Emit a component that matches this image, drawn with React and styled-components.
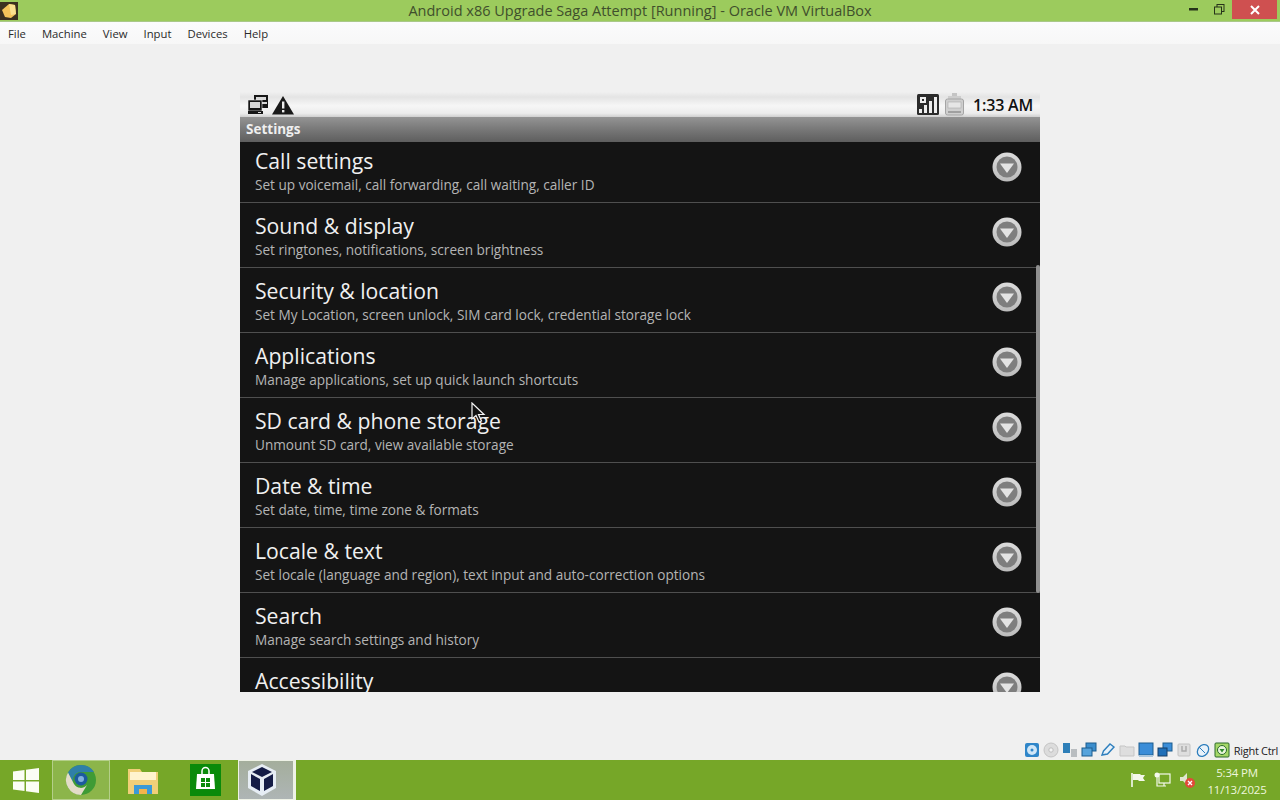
import React from "react";
import styled, { createGlobalStyle } from "styled-components";

const GlobalStyle = createGlobalStyle`
  html, body { margin: 0; padding: 0; }
  body { width: 1280px; height: 800px; overflow: hidden; font-family: "Open Sans", "Liberation Sans", sans-serif; }
`;

const Desktop = styled.div`
  position: relative;
  width: 1280px;
  height: 800px;
  display: flex;
  flex-direction: column;
  background: #f0f0f0;
`;

// window chrome
const TitleBar = styled.div`
  height: 22px;
  flex: none;
  display: grid;
  grid-template-columns: 1fr auto 1fr;
  align-items: center;
  background: #9ccb5d;
  border-bottom: 1px solid #a9c889;
  box-sizing: border-box;
`;
const AppIcon = styled.div`
  width: 18px;
  height: 18px;
  display: flex;
`;
const TitleText = styled.div`
  font-size: 14.5px;
  color: #3f4f2c;
  white-space: nowrap;
`;
const WinButtons = styled.div`
  display: flex;
  justify-content: flex-end;
  align-items: flex-start;
  height: 100%;
  padding-right: 3px;
`;
const WinButton = styled.div`
  width: ${(p) => p.$w}px;
  height: 19px;
  display: flex;
  align-items: center;
  justify-content: center;
  background: ${(p) => (p.$close ? "#cf5050" : "transparent")};
`;
const MenuBar = styled.div`
  height: 22px;
  flex: none;
  display: flex;
  align-items: center;
  background: linear-gradient(#fbfbfc, #f7f7f7);
  padding-left: 8px;
  gap: 16px;
`;
const MenuItem = styled.span`
  font-size: 11.3px;
  color: #2a2a2a;
`;

// guest area
const GuestArea = styled.div`
  flex: 1;
  display: flex;
  justify-content: center;
  padding-top: 48px;
  background: #f0f0f0;
`;
const Screen = styled.div`
  position: relative;
  width: 800px;
  height: 600px;
  display: flex;
  flex-direction: column;
  background: #141414;
  overflow: hidden;
`;
const StatusBar = styled.div`
  height: 25px;
  flex: none;
  display: flex;
  align-items: center;
  padding: 0 7px 0 8px;
  background: linear-gradient(#f0f0f0, #e4e4e4 20%, #f6f6f6 55%, #ececec 85%, #cfcfcf);
`;
const StatusLeft = styled.div`
  display: flex;
  align-items: center;
  gap: 3px;
  flex: 1;
`;
const StatusRight = styled.div`
  display: flex;
  align-items: center;
  gap: 5px;
`;
const Clock = styled.div`
  font-size: 16px;
  font-weight: 600;
  color: #111;
  margin-left: 8px;
  letter-spacing: -0.2px;
`;
const ScreenTitle = styled.div`
  height: 25px;
  flex: none;
  display: flex;
  align-items: center;
  padding: 0 0 2px 6px;
  box-sizing: border-box;
  background: linear-gradient(#949494, #757575 55%, #5e5e5e);
  color: #efefef;
  font-size: 13.5px;
  font-weight: 700;
`;
const List = styled.div`
  flex: 1;
  overflow: hidden;
  display: flex;
  flex-direction: column;
`;
const Row = styled.div`
  height: 65px;
  flex: none;
  box-sizing: border-box;
  margin-top: ${(p) => (p.$first ? "-4px" : "0")};
  display: flex;
  align-items: flex-start;
  padding: 7px 18px 0 15px;
  border-bottom: 1px solid #4f4f4f;
  background: #141414;
`;
const RowText = styled.div`
  flex: 1;
  display: flex;
  flex-direction: column;
`;
const RowTitle = styled.div`
  font-size: 21.2px;
  line-height: 30px;
  margin: 1px 0 -1px;
  color: #f0f0f0;
`;
const RowSub = styled.div`
  font-size: 13.6px;
  line-height: 19px;
  color: #b4b4b4;
`;
const RowButton = styled.svg`
  flex: none;
  margin-top: 7px;
`;
const Scrollbar = styled.div`
  position: absolute;
  right: 0;
  top: 173px;
  width: 4px;
  height: 328px;
  background: #8f8f8f;
  border-radius: 2px;
`;
const Pointer = styled.svg`
  position: absolute;
  left: 471px;
  top: 402px;
`;

// host status bar
const HostStatus = styled.div`
  height: 20px;
  flex: none;
  display: flex;
  align-items: center;
  justify-content: flex-end;
  gap: 3px;
  background: #f0f0f0;
  padding-right: 2px;
`;
const HostKey = styled.span`
  font-size: 11px;
  color: #222;
  margin-left: 1px;
  white-space: nowrap;
  letter-spacing: -0.3px;
`;

// windows taskbar
const Taskbar = styled.div`
  height: 40px;
  flex: none;
  display: flex;
  align-items: stretch;
  background: #76a728;
`;
const StartButton = styled.div`
  width: 52px;
  display: flex;
  align-items: center;
  justify-content: center;
`;
const TaskButton = styled.div`
  width: ${(p) => p.$w}px;
  display: flex;
  align-items: center;
  justify-content: center;
  box-sizing: border-box;
  ${(p) => p.$active && "background: rgba(255,255,255,.16); border: 1px solid rgba(255,255,255,.35);"}
  ${(p) =>
    p.$open &&
    "margin-left: 4px; padding-right: 8px; background: linear-gradient(#a4ae9c, #aeb5b5); border: 1px solid #eef2e6; border-right-width: 3px;"}
`;
const Tray = styled.div`
  margin-left: auto;
  display: flex;
  align-items: center;
  gap: 8px;
  padding-right: 13px;
`;
const TrayClock = styled.div`
  margin-left: 3px;
  width: 60px;
  padding-top: 2px;
  text-align: center;
  color: #eef6dd;
  font-size: 11.5px;
  line-height: 17px;
  letter-spacing: -0.2px;
`;

// last row is cut by the bottom of the guest screen, its summary never shows
const settings = [
  ["Call settings", "Set up voicemail, call forwarding, call waiting, caller ID"],
  ["Sound & display", "Set ringtones, notifications, screen brightness"],
  ["Security & location", "Set My Location, screen unlock, SIM card lock, credential storage lock"],
  ["Applications", "Manage applications, set up quick launch shortcuts"],
  ["SD card & phone storage", "Unmount SD card, view available storage"],
  ["Date & time", "Set date, time, time zone & formats"],
  ["Locale & text", "Set locale (language and region), text input and auto-correction options"],
  ["Search", "Manage search settings and history"],
  ["Accessibility"],
];

const menus = ["File", "Machine", "View", "Input", "Devices", "Help"];

function DownButton() {
  return (
    <RowButton width="30" height="30" viewBox="0 0 30 30">
      <defs>
        <linearGradient id="ring" x1="0" y1="0" x2="0" y2="1">
          <stop offset="0" stopColor="#dcdcdc" />
          <stop offset="1" stopColor="#bcbcbc" />
        </linearGradient>
      </defs>
      <circle cx="15" cy="15" r="14.5" fill="url(#ring)" />
      <circle cx="15" cy="15" r="10.5" fill="#7e7e7e" />
      <path d="M8 11.5h14L15 21z" fill="#e4e4e4" />
    </RowButton>
  );
}

function VboxIcon({ size = 18 }) {
  return (
    <svg width={size} height={size} viewBox="0 0 18 18">
      <rect width="18" height="18" fill="#3b3020" />
      <path d="M2 8l7-6 6 1 1 9-5 4-6-1z" fill="#f4c35a" />
      <path d="M9 2l6 1 1 9-5 1z" fill="#fbe08f" />
    </svg>
  );
}

function NetworkIcon() {
  return (
    <svg width="20" height="20" viewBox="0 0 20 20">
      <rect x="6" y="0" width="14" height="13" fill="#161616" />
      <rect x="8" y="2" width="10" height="3" fill="#d8d8d8" />
      <rect x="14" y="7" width="5" height="2" fill="#d8d8d8" />
      <rect x="0" y="5" width="14" height="11" fill="#161616" stroke="#eee" strokeWidth=".6" />
      <rect x="2" y="7" width="10" height="6" fill="#d8d8d8" />
      <rect x="0" y="16" width="15" height="3" fill="#161616" />
      <rect x="10" y="17" width="3" height="1" fill="#ddd" />
    </svg>
  );
}

function WarningIcon() {
  return (
    <svg width="24" height="20" viewBox="0 0 24 20">
      <path d="M12 1L23 19.500H1z" fill="#1a1a1a" />
      <rect x="11" y="6.500" width="2.400" height="7" fill="#eee" />
      <rect x="11" y="15" width="2.400" height="2.400" fill="#eee" />
    </svg>
  );
}

function SignalIcon() {
  return (
    <svg width="22" height="21" viewBox="0 0 22 21">
      <rect width="22" height="21" rx="1.500" fill="#2b2b2b" />
      <rect x="2" y="15" width="3" height="4" fill="#eee" />
      <rect x="7" y="11" width="3" height="8" fill="#eee" />
      <rect x="12" y="7" width="3" height="12" fill="#eee" />
      <rect x="17" y="3" width="3" height="16" fill="#eee" />
      <rect x="3" y="3" width="6" height="6" fill="#eee" />
      <rect x="5" y="5" width="2" height="2" fill="#2b2b2b" />
    </svg>
  );
}

function BatteryIcon() {
  return (
    <svg width="21" height="23" viewBox="0 0 21 23">
      <rect x="8" y="0" width="5" height="3" fill="#c4c4c4" />
      <rect x="4" y="3" width="13" height="3" fill="#cdcdcd" />
      <rect x="1.500" y="6" width="18" height="16" rx="2" fill="#cfcfcf" stroke="#a4a4a4" />
      <rect x="4" y="9" width="13" height="6" fill="#e6e6e6" stroke="#aaa" strokeWidth=".6" />
      <rect x="4" y="18" width="13" height="2" fill="#a0a0a0" />
    </svg>
  );
}

function HostIcon({ kind }) {
  const shapes = {
    disk: (
      <>
        <rect x="1" y="1" width="14" height="14" rx="2" fill="#2f86c9" />
        <circle cx="8" cy="8" r="5" fill="#cfe6f7" />
        <circle cx="8" cy="8" r="1.500" fill="#2f86c9" />
      </>
    ),
    cd: (
      <>
        <circle cx="8" cy="8" r="7" fill="#dcdcdc" stroke="#c4c4c4" />
        <circle cx="8" cy="8" r="2.200" fill="#f4f4f4" stroke="#bdbdbd" />
      </>
    ),
    audio: (
      <>
        <rect x="1" y="1" width="7" height="10" fill="#2e7fb8" />
        <rect x="9" y="7" width="6" height="8" fill="#b9bdc0" />
      </>
    ),
    net: (
      <>
        <rect x="5" y="1" width="10" height="8" fill="#3b8dcc" stroke="#1d5d8e" />
        <rect x="1" y="6" width="10" height="8" fill="#57a4dc" stroke="#1d5d8e" />
      </>
    ),
    usb: <path d="M2 13l1.500-4L10 2l4 3-6.500 7z" fill="#e8f2fa" stroke="#2f7fbd" strokeWidth="1.400" />,
    folder: <path d="M1 4h5l1 1h8v9H1z" fill="#dedede" stroke="#c5c5c5" />,
    display: (
      <>
        <rect x="1" y="1" width="14" height="12" fill="#3a8dd8" stroke="#1d5d8e" />
        <rect x="1" y="13" width="14" height="2" fill="#a9c5dc" />
      </>
    ),
    capture: (
      <>
        <rect x="6" y="1" width="9" height="8" fill="#3a8dd8" stroke="#1d5d8e" />
        <rect x="1" y="6" width="9" height="8" fill="#1f6fb8" stroke="#173f66" />
      </>
    ),
    cpu: (
      <>
        <rect x="2" y="2" width="12" height="12" rx="1" fill="#dedede" stroke="#c2c2c2" />
        <path d="M6 4v5h4V4" fill="none" stroke="#aaa" strokeWidth="1.400" />
      </>
    ),
    mouse: (
      <>
        <ellipse cx="8" cy="8.500" rx="5" ry="6.500" transform="rotate(40 8 8.500)" fill="#e9f2fa" stroke="#2f7fbd" strokeWidth="1.300" />
        <path d="M4 5l6 6" stroke="#2f7fbd" />
      </>
    ),
    key: (
      <>
        <rect x="1" y="1" width="14" height="14" rx="1" fill="#a6d868" stroke="#2a6a2a" />
        <circle cx="8" cy="8" r="4.500" fill="#e9f5dc" stroke="#2a6a2a" />
        <path d="M5.500 7h5L8 10.500z" fill="#2e8b2e" />
      </>
    ),
  };
  return (
    <svg width="16" height="16" viewBox="0 0 16 16">
      {shapes[kind]}
    </svg>
  );
}

const hostIcons = ["disk", "cd", "audio", "net", "usb", "folder", "display", "capture", "cpu", "mouse", "key"];

export default function App() {
  return (
    <Desktop>
      <GlobalStyle />
      <TitleBar>
        <AppIcon>
          <VboxIcon />
        </AppIcon>
        <TitleText>Android x86 Upgrade Saga Attempt [Running] - Oracle VM VirtualBox</TitleText>
        <WinButtons>
          <WinButton $w={26}>
            <svg width="9" height="3" viewBox="0 0 9 3">
              <rect width="9" height="2.500" fill="#26331a" />
            </svg>
          </WinButton>
          <WinButton $w={26}>
            <svg width="11" height="11" viewBox="0 0 11 11">
              <rect x="3" y=".5" width="7" height="7" fill="none" stroke="#26331a" />
              <rect x=".5" y="3" width="7" height="7" fill="#9ccb5d" stroke="#26331a" />
            </svg>
          </WinButton>
          <WinButton $w={45} $close>
            <svg width="10" height="10" viewBox="0 0 10 10">
              <path d="M1 1l8 8M9 1l-8 8" stroke="#fff" strokeWidth="2" />
            </svg>
          </WinButton>
        </WinButtons>
      </TitleBar>
      <MenuBar>
        {menus.map((m) => (
          <MenuItem key={m}>{m}</MenuItem>
        ))}
      </MenuBar>
      <GuestArea>
        <Screen>
          <StatusBar>
            <StatusLeft>
              <NetworkIcon />
              <WarningIcon />
            </StatusLeft>
            <StatusRight>
              <SignalIcon />
              <BatteryIcon />
            </StatusRight>
            <Clock>1:33 AM</Clock>
          </StatusBar>
          <ScreenTitle>Settings</ScreenTitle>
          <List>
            {settings.map((s, i) => (
              <Row key={s[0]} $first={i === 0}>
                <RowText>
                  <RowTitle>{s[0]}</RowTitle>
                  {s[1] && <RowSub>{s[1]}</RowSub>}
                </RowText>
                <DownButton />
              </Row>
            ))}
          </List>
          <Scrollbar />
        </Screen>
      </GuestArea>
      <HostStatus>
        {hostIcons.map((k) => (
          <HostIcon key={k} kind={k} />
        ))}
        <HostKey>Right Ctrl</HostKey>
      </HostStatus>
      <Taskbar>
        <StartButton>
          <svg width="26" height="25" viewBox="0 0 26 25">
            <path d="M0 3.500l11.500-1.500v10H0zM13 1.800L26 0v12H13zM0 13.500h11.500V23L0 21.500zM13 13.500h13V25l-13-1.800z" fill="#fbfdf5" />
          </svg>
        </StartButton>
        <TaskButton $active $w={58}>
          <svg width="32" height="32" viewBox="0 0 32 32">
            <circle cx="16" cy="16" r="15" fill="#3f9b35" />
            <path d="M16 1a15 15 0 0 0-13 7.500L9 20a8 8 0 0 1 7-12h13A15 15 0 0 0 16 1z" fill="#2f7fa8" />
            <path d="M3 8.500A15 15 0 0 0 16 31l6-10a8 8 0 0 1-13-1z" fill="#e3dcc8" />
            <circle cx="16" cy="15" r="6.500" fill="#1c5a9e" />
            <circle cx="16" cy="15" r="3" fill="#7fb0dd" />
          </svg>
        </TaskButton>
        <TaskButton $w={66}>
          <svg width="34" height="32" viewBox="0 0 34 32">
            <path d="M2 5h12l2 3h16v22H2z" fill="#f0cf78" />
            <rect x="4" y="8" width="26" height="8" fill="#fff3cf" />
            <path d="M8 30v-9h18v9h-5v-5h-8v5z" fill="#3b9ad6" />
            <rect x="13" y="25" width="8" height="5" fill="#f4b54a" />
          </svg>
        </TaskButton>
        <TaskButton $w={58}>
          <svg width="31" height="32" viewBox="0 0 31 32">
            <rect width="31" height="32" fill="#0a8a0a" />
            <path d="M7 10h17l1 15H6z" fill="#fff" />
            <path d="M12 10V7a3.500 3.500 0 0 1 7 0v3" fill="none" stroke="#fff" strokeWidth="1.500" />
            <rect x="11" y="14" width="4" height="4" fill="#0a8a0a" />
            <rect x="16" y="14" width="4" height="4" fill="#0a8a0a" />
            <rect x="11" y="19" width="4" height="4" fill="#0a8a0a" />
            <rect x="16" y="19" width="4" height="4" fill="#0a8a0a" />
          </svg>
        </TaskButton>
        <TaskButton $open $w={58}>
          <svg width="32" height="34" viewBox="0 0 32 34">
            <path d="M16 1l14 7v17l-14 8-14-8V8z" fill="#e6edf4" />
            <path d="M16 4l10 5-10 5-10-5z" fill="#141c46" />
            <path d="M5 11l9 5v12l-9-5z" fill="#141c46" />
            <path d="M18 16l9-5v12l-9 5z" fill="#141c46" />
          </svg>
        </TaskButton>
        <Tray>
          <svg width="16" height="16" viewBox="0 0 16 16">
            <path d="M2 1v14" stroke="#fff" strokeWidth="1.500" />
            <path d="M3 2h7l1 1h4l-2 3 2 3H9L8 8H3z" fill="#f4f8ec" />
          </svg>
          <svg width="17" height="16" viewBox="0 0 17 16">
            <rect x="5" y="2" width="11" height="9" fill="none" stroke="#f4f8ec" strokeWidth="1.200" />
            <circle cx="3" cy="3" r="2.500" fill="#f4f8ec" />
            <path d="M3 5v9h9M10 11v3" fill="none" stroke="#f4f8ec" strokeWidth="1.200" />
          </svg>
          <svg width="17" height="17" viewBox="0 0 17 17">
            <path d="M1 5h3l4-4v12L4 9H1z" fill="#dfe6d0" />
            <circle cx="11" cy="11" r="5" fill="#e04a3a" />
            <path d="M9 9l4 4M13 9l-4 4" stroke="#fff" strokeWidth="1.300" />
          </svg>
          <TrayClock>
            5:34 PM
            <br />
            11/13/2025
          </TrayClock>
        </Tray>
      </Taskbar>
      <Pointer width="15" height="22" viewBox="0 0 15 22">
        <path d="M1 1v16l4-3.500 3 6.500 2.500-1-3-6.500H13z" fill="#111" stroke="#f4f4f4" strokeWidth="1.200" />
      </Pointer>
    </Desktop>
  );
}
